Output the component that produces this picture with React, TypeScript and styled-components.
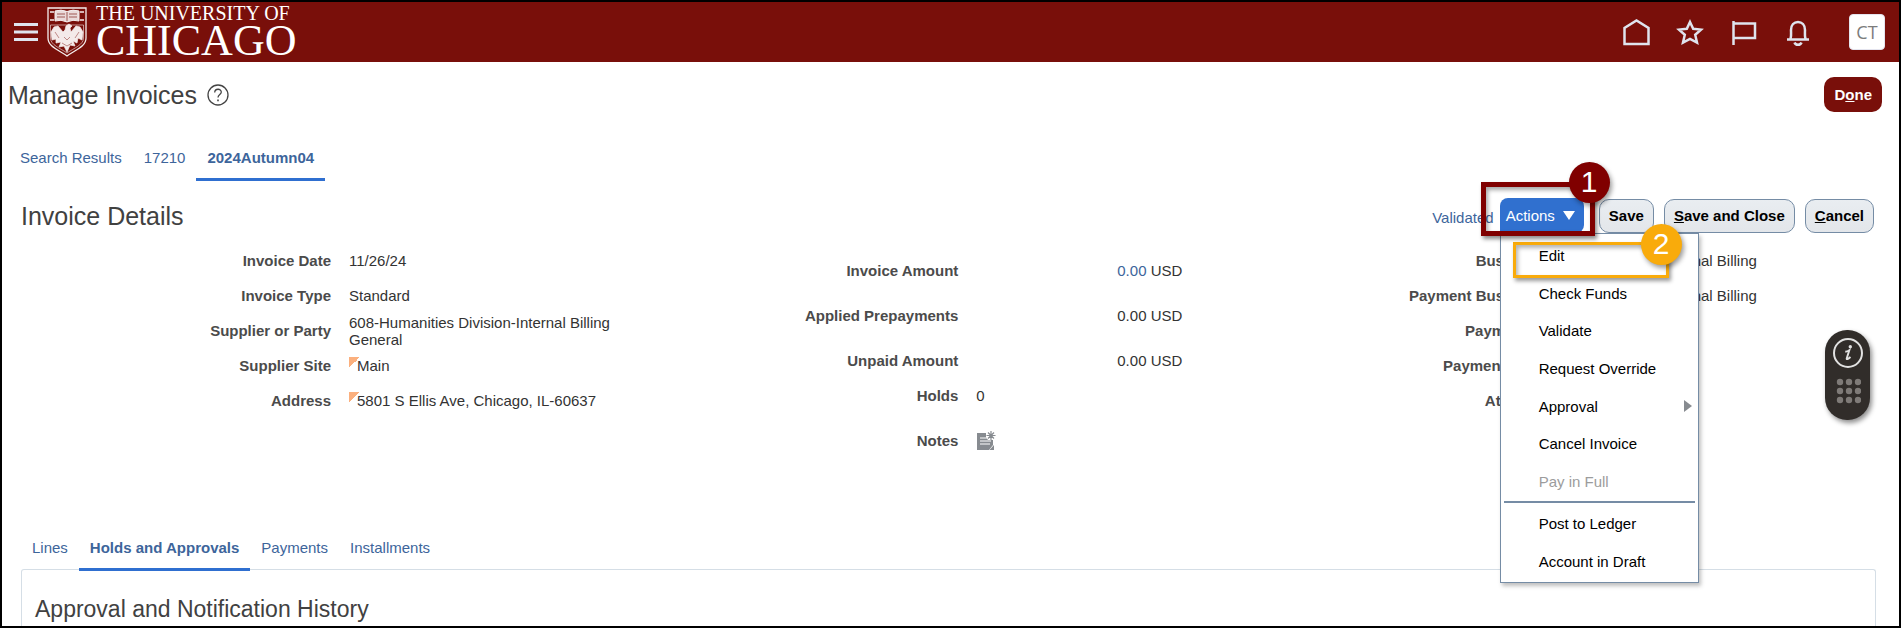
import React from "react";
import styled, { createGlobalStyle } from "styled-components";

const GlobalStyle = createGlobalStyle`
  *, *::before, *::after { box-sizing: border-box; }
  body { margin: 0; background: #fff; }
  body, button { font-family: "Liberation Sans", Arial, sans-serif; font-size: 15px; }
  h1, h2, h3, ul, dl, dd, dt { margin: 0; padding: 0; font-weight: 400; }
  ul { list-style: none; }
  a { color: #3d659b; text-decoration: none; }
  button { cursor: pointer; margin: 0; }
`;

const Page = styled.div`
  display: flex;
  flex-direction: column;
  height: 100vh;
  overflow: hidden;
  border: 2px solid #000;
  color: #333;
  line-height: 17px;
`;

const Header = styled.header`
  display: flex;
  align-items: center;
  flex: none;
  height: 60px;
  padding: 0 14px 0 12px;
  background: #790f0a;
`;

const IconButton = styled.button`
  display: flex;
  padding: 0;
  border: 0;
  background: none;
  color: #dfe4ee;
`;

const Brand = styled.a`
  display: flex;
  align-items: center;
  gap: 9px;
  margin-left: 9px;
  color: #fff;
`;

const Wordmark = styled.span`
  display: flex;
  flex-direction: column;
  font-family: "Liberation Serif", "Times New Roman", serif;
  white-space: nowrap;
`;

const WordmarkSmall = styled.span`
  font-size: 20px;
  line-height: 17px;
`;

const WordmarkLarge = styled.span`
  font-size: 44px;
  line-height: 38px;
`;

const HeaderNav = styled.nav`
  display: flex;
  gap: 24px;
  margin-left: auto;
`;

const Avatar = styled.button`
  width: 36px;
  height: 36px;
  margin-left: 36px;
  padding: 0;
  border: 1px solid #e4e4ee;
  border-radius: 4px;
  background: #fff;
  color: #7c7c7c;
  font-family: "Open Sans", sans-serif;
  font-size: 18px;
`;

const TitleRow = styled.div`
  display: flex;
  align-items: center;
  gap: 10px;
  flex: none;
  height: 65px;
  padding: 0 17px 0 6px;
`;

const PageTitle = styled.h1`
  font-size: 25px;
  line-height: 30px;
  color: #414141;
`;

const DoneButton = styled.button`
  height: 35px;
  margin-left: auto;
  padding: 0 10px;
  border: 0;
  border-radius: 10px;
  background: #790f0a;
  color: #fff;
  font-weight: 700;
`;

const Tabs = styled.nav<{ $indent: number }>`
  display: flex;
  flex: none;
  padding-left: ${(p) => p.$indent}px;
`;

const Tab = styled.a<{ $active?: boolean }>`
  height: 32px;
  padding: 0 11px;
  border-bottom: 3px solid ${(p) => (p.$active ? "#2f6fd0" : "transparent")};
  font-weight: ${(p) => (p.$active ? 700 : 400)};
`;

const TopTabs = styled.div`
  padding-top: 22px;
`;

const DetailsBar = styled.div`
  display: flex;
  align-items: center;
  flex: none;
  height: 35px;
  margin-top: 17px;
  padding: 0 25px 0 19px;
`;

const SectionTitle = styled.h2`
  font-size: 25px;
  line-height: 30px;
  color: #414141;
`;

const Toolbar = styled.div`
  display: flex;
  align-items: center;
  gap: 10px;
  margin-left: auto;
`;

const Status = styled.a`
  margin-right: -4px;
  padding-top: 4px;
`;

const ActionsWrap = styled.div`
  position: relative;
  margin-right: 5px;
`;

const ActionsButton = styled.button`
  display: flex;
  align-items: center;
  gap: 8px;
  height: 35px;
  padding: 0 9px 0 6px;
  border: 0;
  border-radius: 8px 8px 8px 0;
  background: #3070cf;
  color: #fff;
`;

const ToolButton = styled.button`
  height: 34px;
  padding: 0 9px;
  border: 1px solid #758ca5;
  border-radius: 10px;
  background: linear-gradient(#e9edf1, #e3e6ea);
  color: #000;
  font-weight: 700;
`;

const Menu = styled.div`
  position: absolute;
  z-index: 2;
  top: 35px;
  left: 0;
  width: 199px;
  padding: 3px 3px 2px;
  border: 1px solid #758ca5;
  background: #fff;
  box-shadow: 2px 3px 4px rgba(0, 0, 0, 0.25);
`;

const MenuGroup = styled.ul<{ $height: number }>`
  display: grid;
  grid-auto-rows: 1fr;
  height: ${(p) => p.$height}px;
`;

const MenuItem = styled.button`
  display: flex;
  align-items: center;
  justify-content: space-between;
  width: 100%;
  height: 100%;
  padding: 0 3px 0 35px;
  border: 0;
  background: none;
  color: #000;
  text-align: left;
  &:disabled { color: #9c9c9c; }
`;

const Divider = styled.hr`
  height: 2px;
  margin: 1px 0;
  border: 0;
  background: #758ca5;
`;

const ActionsOutline = styled.div`
  position: absolute;
  z-index: 3;
  top: -16px;
  left: -19px;
  width: 114px;
  height: 54px;
  border: 5px solid #800000;
  box-shadow: 2px 3px 4px rgba(0, 0, 0, 0.45), inset 2px 3px 4px rgba(0, 0, 0, 0.35);
  pointer-events: none;
`;

const EditOutline = styled.div`
  position: absolute;
  z-index: 3;
  top: 8px;
  left: 12px;
  width: 156px;
  height: 36px;
  border: 3px solid #f9ab0b;
  box-shadow: 2px 3px 4px rgba(0, 0, 0, 0.4), inset 2px 3px 4px rgba(0, 0, 0, 0.3);
  pointer-events: none;
`;

const StepBadge = styled.span<{ $color: string; $top: number; $right: number }>`
  position: absolute;
  top: ${(p) => p.$top}px;
  right: ${(p) => p.$right}px;
  width: 41px;
  height: 41px;
  border-radius: 50%;
  background: ${(p) => p.$color};
  box-shadow: 2px 3px 5px rgba(0, 0, 0, 0.4);
  color: #fff;
  font-size: 30px;
  line-height: 40px;
  text-align: center;
`;

const Details = styled.section`
  display: grid;
  grid-template-columns: repeat(3, 1fr);
  flex: none;
  min-height: 306px;
  padding-top: 10px;
`;

const FieldList = styled.dl<{ $top?: number }>`
  padding-top: ${(p) => p.$top ?? 0}px;
`;

const Field = styled.div<{ $label: number; $height?: number }>`
  display: grid;
  grid-template-columns: ${(p) => p.$label}px 1fr;
  align-items: center;
  gap: 18px;
  height: ${(p) => p.$height ?? 35}px;
`;

const FieldName = styled.dt`
  color: #4b4b4b;
  font-weight: 700;
  text-align: right;
  white-space: nowrap;
`;

const FieldValue = styled.dd<{ $indent?: number }>`
  max-width: 290px;
  padding-left: ${(p) => p.$indent ?? 0}px;
`;

const Amount = styled.dd`
  width: 206px;
  text-align: right;
`;

const Flagged = styled.span`
  display: flex;
  align-items: center;
  &::before {
    content: "";
    width: 11px;
    height: 11px;
    margin: -6px -3px 0 0;
    background: linear-gradient(135deg, #fbb07e 50%, transparent 50%);
  }
`;

const Panel = styled.section`
  flex: 1;
  min-height: 56px;
  margin: -2px 23px 0 19px;
  padding: 25px 13px 0;
  border: 1px solid #d5dee6;
  border-bottom: 0;
  border-radius: 3px 3px 0 0;
`;

const PanelTitle = styled.h3`
  font-size: 23px;
  line-height: 28px;
  color: #414141;
`;

const TabLayer = styled.div`
  position: relative;
  z-index: 1;
`;

const FloatingHelp = styled.aside`
  position: fixed;
  top: 330px;
  right: 31px;
  display: flex;
  flex-direction: column;
  align-items: center;
  gap: 10px;
  width: 45px;
  height: 90px;
  padding-top: 8px;
  border-radius: 22px;
  background: #312d2a;
  box-shadow: 2px 3px 5px rgba(0, 0, 0, 0.45);
`;

const Shield = () => (
  <svg width="40" height="50" viewBox="0 0 40 50" fill="none" stroke="#f5eeee">
    <path d="M1 1H39V31C39 40 28 43 20 49C12 43 1 40 1 31Z" strokeWidth="1.3" />
    <path d="M3.500 18H36.500V31C36.500 38 27 41 20 46C13 41 3.500 38 3.500 31Z" strokeWidth=".6" />
    <path d="M8 4Q14 2 20 4.500Q26 2 32 4V14Q26 12 20 15Q14 12 8 14Z" fill="#eadada" />
    <path d="M10 7H18M22 7H30M10 10H18M22 10H30M20 5V14" stroke="#8e3733" strokeWidth=".8" />
    <path d="M3 5H7M3 13H7M33 5H37M33 13H37" strokeWidth="1.500" />
    <path d="M19 19L22 17L25 19L23 21L24 25L29 19L33 20L36 25L35 33L31 31L30 36L26 34L28 39L23 38L20 45L17 39L12 40L14 35L9 36L9 32L5 33L4 25L7 20L11 19L16 25L18 23Z" fill="#f4eaea" strokeWidth=".7" />
    <path d="M8 25L12 31M32 25L28 31M17 30L20 33L23 30M15 36L20 39L25 36" stroke="#b0716e" strokeWidth=".8" />
  </svg>
);

const MenuIcon = () => (
  <svg width="24" height="20" viewBox="0 0 24 20" fill="currentColor">
    <path d="M0 1H24V4H0ZM0 8.500H24V11.500H0ZM0 16H24V19H0Z" />
  </svg>
);

const headerIcons = [
  { label: "Home", d: "M3.500 27V11L15.500 3.500L27.500 11V27Z" },
  { label: "Favorites", d: "M15 5L18.200 11.800L26 12.600L20.200 17.800L22 25.500L15 21.800L8 25.500L9.800 17.800L4 12.600L11.800 11.800Z" },
  { label: "Watchlist", d: "M4.500 4V28M4.500 6.500H26V21H4.500" },
  { label: "Notifications", d: "M4 22.500H26M7.500 22C8.500 19 8 16 8 13C8 8 11 5 15 5C19 5 22 8 22 13C22 16 21.500 19 22.500 22M11.500 25.500C12.500 28.500 17.500 28.500 18.500 25.500" },
];

const HelpIcon = () => (
  <svg width="22" height="22" viewBox="0 0 22 22" fill="none" stroke="#444" strokeWidth="1.300">
    <circle cx="11" cy="11" r="10" />
    <path d="M7.700 8.500C7.800 4.200 14.300 4.300 14.300 8C14.300 10.500 11 10.500 11 13.500" />
    <path d="M11 15.500V17.200" strokeWidth="1.600" />
  </svg>
);

const NoteIcon = () => (
  <svg width="20" height="20" viewBox="0 0 20 20">
    <path d="M1 2H10V6L12 9H17V14L13 19H1Z" fill="#878b90" />
    <path d="M4 7H11M4 10H15M4 13H14" stroke="#fff" strokeWidth="1" />
    <path d="M18 14V19H13.500Z" fill="#878b90" />
    <path d="M15 0V9M10.500 4.500H19.500M12 1.500L18 7.500M18 1.500L12 7.500" stroke="#878b90" strokeWidth="1.200" />
  </svg>
);

const InfoIcon = () => (
  <svg width="30" height="30" viewBox="0 0 30 30">
    <circle cx="15" cy="15" r="14" fill="none" stroke="#e2e2e2" strokeWidth="2" />
    <circle cx="17.300" cy="8.700" r="1.700" fill="#e2e2e2" />
    <path d="M12.300 13.800Q14.500 13.500 16.300 12.300L13.700 20.500Q13.500 22.300 17.500 19" fill="none" stroke="#e2e2e2" strokeWidth="1.900" />
  </svg>
);

const KeypadIcon = () => (
  <svg width="26" height="26" viewBox="0 0 26 26" fill="#7f7b78">
    {[4, 13, 22].map((y) => [5, 14, 23].map((x) => <circle key={`${x}-${y}`} cx={x} cy={y} r="3.200" />))}
  </svg>
);

const supplierFields = [
  { name: "Invoice Date", value: "11/26/24" },
  { name: "Invoice Type", value: "Standard" },
  { name: "Supplier or Party", value: "608-Humanities Division-Internal Billing General" },
  { name: "Supplier Site", value: "Main", flagged: true },
  { name: "Address", value: "5801 S Ellis Ave, Chicago, IL-60637", flagged: true },
];

const amountFields = [
  { name: "Invoice Amount", link: true },
  { name: "Applied Prepayments" },
  { name: "Unpaid Amount" },
];

const paymentFields = [
  { name: "Business Unit", value: "Internal Billing" },
  { name: "Payment Business Unit", value: "Internal Billing" },
  { name: "Payment Terms" },
  { name: "Payment Currency" },
  { name: "Attachments" },
];

const menuItems = ["Edit", "Check Funds", "Validate", "Request Override", "Approval", "Cancel Invoice", "Pay in Full"];
const ledgerItems = ["Post to Ledger", "Account in Draft"];

export default function App() {
  return (
    <>
      <GlobalStyle />
      <Page>
        <Header>
          <IconButton aria-label="Navigator"><MenuIcon /></IconButton>
          <Brand href="#" aria-label="The University of Chicago">
            <Shield />
            <Wordmark>
              <WordmarkSmall>THE UNIVERSITY OF</WordmarkSmall>
              <WordmarkLarge>CHICAGO</WordmarkLarge>
            </Wordmark>
          </Brand>
          <HeaderNav>
            {headerIcons.map((icon) => (
              <IconButton key={icon.label} aria-label={icon.label}>
                <svg width="30" height="30" viewBox="0 0 30 30" fill="none" stroke="currentColor" strokeWidth="2.500">
                  <path d={icon.d} />
                </svg>
              </IconButton>
            ))}
          </HeaderNav>
          <Avatar>CT</Avatar>
        </Header>

        <TitleRow>
          <PageTitle>Manage Invoices</PageTitle>
          <IconButton aria-label="Help"><HelpIcon /></IconButton>
          <DoneButton>D<u>o</u>ne</DoneButton>
        </TitleRow>

        <TopTabs>
          <Tabs $indent={7}>
            <Tab href="#">Search Results</Tab>
            <Tab href="#">17210</Tab>
            <Tab href="#" $active>2024Autumn04</Tab>
          </Tabs>
        </TopTabs>

        <DetailsBar>
          <SectionTitle>Invoice Details</SectionTitle>
          <Toolbar>
            <Status href="#">Validated</Status>
            <ActionsWrap>
              <ActionsButton aria-haspopup="menu" aria-expanded="true">
                Actions
                <svg width="12" height="9" viewBox="0 0 12 9" fill="#fff"><path d="M0 0H12L6 9Z" /></svg>
              </ActionsButton>
              <Menu>
                <MenuGroup $height={263}>
                  {menuItems.map((item) => (
                    <li key={item}>
                      <MenuItem disabled={item === "Pay in Full"}>
                        {item}
                        {item === "Approval" && (
                          <svg width="8" height="12" viewBox="0 0 8 12" fill="#878b90"><path d="M0 0L8 6L0 12Z" /></svg>
                        )}
                      </MenuItem>
                    </li>
                  ))}
                </MenuGroup>
                <Divider />
                <MenuGroup $height={76}>
                  {ledgerItems.map((item) => <li key={item}><MenuItem>{item}</MenuItem></li>)}
                </MenuGroup>
                <EditOutline>
                  <StepBadge $color="#f9ab0b" $top={-21} $right={-16}>2</StepBadge>
                </EditOutline>
              </Menu>
              <ActionsOutline>
                <StepBadge $color="#800000" $top={-25} $right={-20}>1</StepBadge>
              </ActionsOutline>
            </ActionsWrap>
            <ToolButton>Save</ToolButton>
            <ToolButton><u>S</u>ave and Close</ToolButton>
            <ToolButton><u>C</u>ancel</ToolButton>
          </Toolbar>
        </DetailsBar>

        <Details>
          <FieldList>
            {supplierFields.map((f) => (
              <Field key={f.name} $label={329}>
                <FieldName>{f.name}</FieldName>
                <FieldValue>{f.flagged ? <Flagged>{f.value}</Flagged> : f.value}</FieldValue>
              </Field>
            ))}
          </FieldList>
          <FieldList $top={5}>
            {amountFields.map((f) => (
              <Field key={f.name} $label={324} $height={45}>
                <FieldName>{f.name}</FieldName>
                <Amount>{f.link ? <a href="#">0.00</a> : "0.00"} USD</Amount>
              </Field>
            ))}
            <Field $label={324} $height={25}>
              <FieldName>Holds</FieldName>
              <FieldValue>0</FieldValue>
            </Field>
            <Field $label={324} $height={65}>
              <FieldName>Notes</FieldName>
              <FieldValue>
                <IconButton aria-label="Add note"><NoteIcon /></IconButton>
              </FieldValue>
            </Field>
          </FieldList>
          <FieldList>
            {paymentFields.map((f) => (
              <Field key={f.name} $label={309}>
                <FieldName>{f.name}</FieldName>
                <FieldValue $indent={69}>{f.value}</FieldValue>
              </Field>
            ))}
          </FieldList>
        </Details>

        <TabLayer>
          <Tabs $indent={19}>
            <Tab href="#">Lines</Tab>
            <Tab href="#" $active>Holds and Approvals</Tab>
            <Tab href="#">Payments</Tab>
            <Tab href="#">Installments</Tab>
          </Tabs>
        </TabLayer>
        <Panel>
          <PanelTitle>Approval and Notification History</PanelTitle>
        </Panel>

        <FloatingHelp>
          <InfoIcon />
          <KeypadIcon />
        </FloatingHelp>
      </Page>
    </>
  );
}
